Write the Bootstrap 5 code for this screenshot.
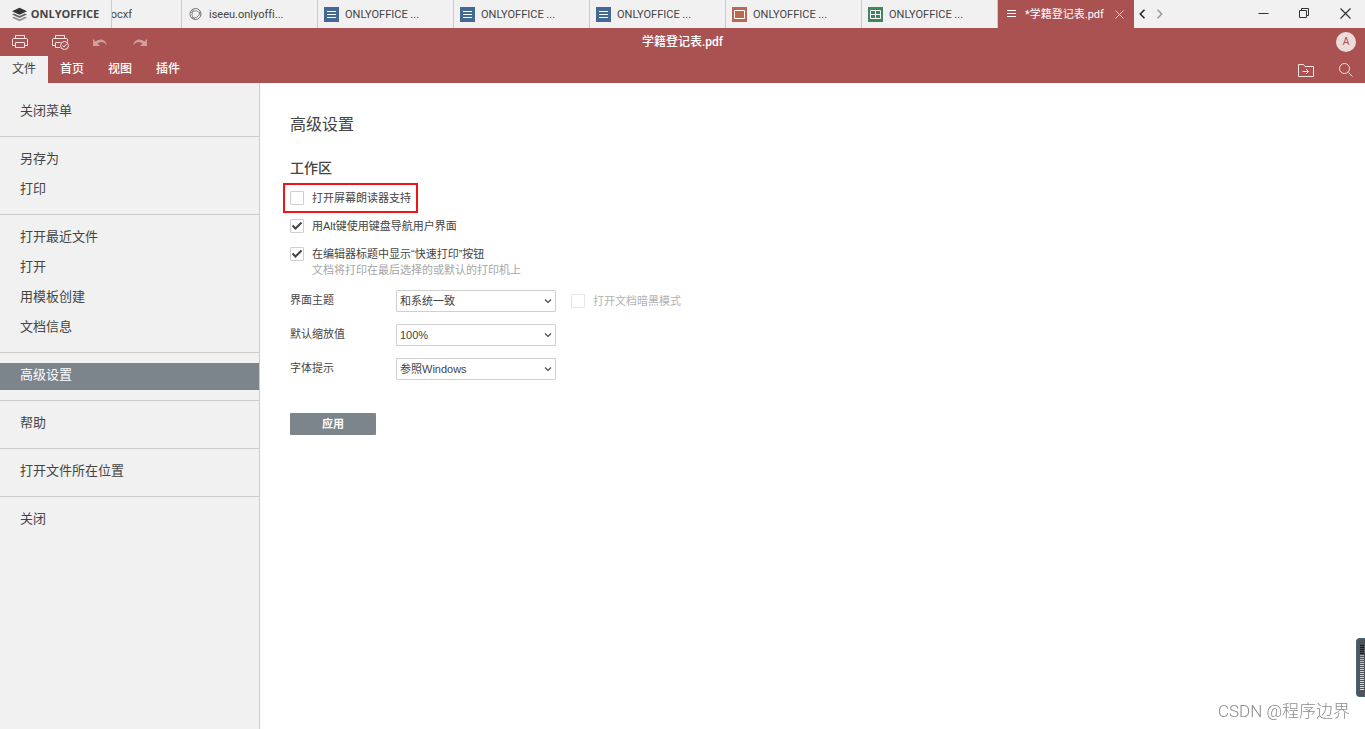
<!DOCTYPE html>
<html lang="zh-CN">
<head>
<meta charset="utf-8">
<meta name="viewport" content="width=device-width, initial-scale=1">
<title>学籍登记表.pdf</title>
<link rel="stylesheet" href="https://cdn.jsdelivr.net/npm/bootstrap@5.3.0/dist/css/bootstrap.min.css">
<style>
  :root { --brand: #aa5252; --panel: #f1f1f1; --line: #cbcbcb; --ink: #444; --accent: #7d858c; }
  body { font-family: "Liberation Sans", "Noto Sans CJK SC", sans-serif; font-size: 11px; line-height: 16px; color: var(--ink); }
  button { font-family: inherit; }
  svg { display: block; flex: none; }
  .plain-btn { border: 0; background: none; padding: 0; color: inherit; display: flex; align-items: center; justify-content: center; }

  /* window tab strip */
  .tab-strip { height: 28px; background: var(--panel); }
  .start-btn { width: 112px; border-right: 1px solid var(--line); font: 700 11px/16px "Open Sans", sans-serif; gap: 4px; }
  .doc-tab { width: 136px; padding: 0 6px; gap: 6px; border-right: 1px solid var(--line); font-family: Roboto, "Noto Sans CJK SC", sans-serif; font-variant-ligatures: none; line-height: 18px; color: var(--ink); text-decoration: none; min-width: 0; }
  .doc-tab span { padding-top: 1px; }
  .doc-tab.clipped { width: 70px; padding: 0; }
  .clip-name { width: 20px; }
  .doc-tab.current { background: var(--brand); border-color: var(--brand); color: #fff; }
  .close-tab { width: 15px; margin-left: auto; }
  .scroll-btn { width: 17px; }
  .win-btns { gap: 2px; }
  .win-btn { width: 39px; }

  /* editor header */
  .app-head { background: var(--brand); color: #fff; }
  .title-row { height: 28px; }
  .tool-btn { width: 40px; height: 28px; }
  .tool-btn:disabled { opacity: .45; }
  .doc-title { font-size: 12px; font-family: Roboto, "Noto Sans CJK SC", sans-serif; font-weight: 500; }
  .avatar { width: 20px; height: 20px; background: #eedcdc; color: var(--brand); font-size: 10px; margin-right: 9px; }
  .ribbon { height: 27px; font-size: 12px; }
  .ribbon a { color: #fff; text-decoration: none; padding: 0 12px; line-height: 27px; font-weight: 500; }
  .ribbon a.current { background: var(--panel); color: var(--ink); font-weight: 400; }

  /* file menu */
  .file-menu { width: 260px; background: var(--panel); border-right: 1px solid var(--line); font-size: 13px; padding-top: 6px; flex: none; }
  .menu-group { padding: 10px 0; display: grid; gap: 3px; border-bottom: 1px solid var(--line); }
  .menu-group:last-child { border: 0; }
  .menu-group a { color: var(--ink); text-decoration: none; padding: 0 20px 3px; line-height: 24px; }
  .menu-group a.current { background: var(--accent); color: #fff; }

  /* settings page */
  .settings { padding: 30px; }
  .settings h1 { font-size: 16px; line-height: 24px; font-weight: 400; margin: 0 0 21px; }
  .settings h2 { font-size: 14px; line-height: 20px; font-weight: 500; margin: 0 0 12px; }
  .option-list { display: grid; gap: 12px; }
  .option { gap: 8px; width: fit-content; }
  .option .form-check-input { width: 14px; height: 14px; margin: 0; flex: none; border: 1px solid #cfcfcf; border-radius: 1px; background-color: #fff; }
  .option .form-check-input:checked { border-color: #cfcfcf; background-color: #fff; background-size: 12px 12px;
    background-image: url("data:image/svg+xml,%3Csvg xmlns='http://www.w3.org/2000/svg' viewBox='0 0 12 12'%3E%3Cpath d='M1.5 5.5 4.5 8.5 10.5 2.5' fill='none' stroke='%23444' stroke-width='2'/%3E%3C/svg%3E"); }
  .option.off { color: #b2b2b2; margin-left: 15px; }
  .option .form-check-input:disabled { opacity: .5; }
  .highlighted { outline: 2px solid #f01414; outline-offset: 5px; }
  .hint { padding-left: 22px; color: #a5a5a5; }
  .field-name { width: 106px; line-height: 20px; }
  .form-select.choice { width: 160px; height: 22px; padding: 0 16px 0 3px; font-size: 11px; line-height: 20px; color: var(--ink); border: 1px solid #cfcfcf; border-radius: 1px; background-size: 8px 8px; background-position: right 3px center;
    background-image: url("data:image/svg+xml,%3Csvg xmlns='http://www.w3.org/2000/svg' viewBox='0 0 8 8'%3E%3Cpath d='M1 2.5 4 5.5 7 2.5' fill='none' stroke='%23444' stroke-width='1.1'/%3E%3C/svg%3E"); }
  .field-rows { display: grid; gap: 12px; margin: 12px 0 33px; }
  .apply-btn { width: 86px; height: 22px; padding: 0; border: 0; border-radius: 1px; background: var(--accent); color: #fff; font-size: 11px; font-weight: 700; line-height: 20px; }

  .watermark { right: 15px; bottom: 6px; font-family: Roboto, "Noto Sans CJK SC", sans-serif; font-size: 17px; line-height: 24px; font-weight: 300; color: #8c8c8c; }
  .meter { right: 0; bottom: 32px; width: 9px; height: 59px; background: #50555b; border: 1px solid #44687a; border-right: 0; border-radius: 4px 0 0 4px; }
  .meter::after { content: ""; position: absolute; right: 1px; top: 6px; height: 46px; width: 4px;
    background: repeating-linear-gradient(transparent 0 1px, #50555b 1px 2px), linear-gradient(#17191c 0 10px, #f0a050 10px, #f5c85a 20px, #f5e678); }
</style>
</head>
<body class="d-flex flex-column min-vh-100">

<svg class="d-none">
  <symbol id="ic-doc" viewBox="0 0 15 15"><rect width="15" height="15" fill="#446995"/><path d="M3 4.500h9M3 7.500h9M3 10.500h9" stroke="#fff"/></symbol>
  <symbol id="ic-slide" viewBox="0 0 15 15"><rect width="15" height="15" fill="#be664f"/><path d="M2.500 3.500h10v8h-10z" fill="none" stroke="#fff"/></symbol>
  <symbol id="ic-sheet" viewBox="0 0 15 15"><rect width="15" height="15" fill="#40865c"/><path d="M2.500 3.500h10v8h-10zM2.500 7.500h10M7.500 3.500v8" fill="none" stroke="#fff"/></symbol>
</svg>

<nav class="tab-strip d-flex align-items-stretch" aria-label="窗口">
  <button class="plain-btn start-btn">
    <svg width="15" height="15" viewBox="0 0 16 16"><path d="M8 .8 16 4.500 8 8.200 0 4.500z" fill="#333"/><path d="M0 8 2.200 7 8 9.600 13.800 7 16 8 8 11.700z" fill="#666"/><path d="M0 11.500 2.200 10.500 8 13.100 13.800 10.500 16 11.500 8 15.200z" fill="#909090"/></svg>
    ONLYOFFICE
  </button>
  <a href="#" class="doc-tab clipped d-flex align-items-center"><span class="clip-name d-flex justify-content-end overflow-hidden">ocxf</span></a>
  <a href="#" class="doc-tab d-flex align-items-center">
    <svg width="15" height="15" viewBox="0 0 15 15" fill="none" stroke="#666"><circle cx="7.500" cy="7" r="5.500" stroke-width=".9"/><path d="M3 5.500Q6 3 9 4T12.500 8.500M12 4.500Q11.500 9 9 10T4 11M7.500 12.500Q4 10.500 4 8T5.500 2.500" stroke-width=".7"/></svg>
    <span>iseeu.onlyoffi...</span>
  </a>
  <a href="#" class="doc-tab d-flex align-items-center"><svg width="15" height="15"><use href="#ic-doc"/></svg><span>ONLYOFFICE ...</span></a>
  <a href="#" class="doc-tab d-flex align-items-center"><svg width="15" height="15"><use href="#ic-doc"/></svg><span>ONLYOFFICE ...</span></a>
  <a href="#" class="doc-tab d-flex align-items-center"><svg width="15" height="15"><use href="#ic-doc"/></svg><span>ONLYOFFICE ...</span></a>
  <a href="#" class="doc-tab d-flex align-items-center"><svg width="15" height="15"><use href="#ic-slide"/></svg><span>ONLYOFFICE ...</span></a>
  <a href="#" class="doc-tab d-flex align-items-center"><svg width="15" height="15"><use href="#ic-sheet"/></svg><span>ONLYOFFICE ...</span></a>
  <div class="doc-tab current d-flex align-items-center">
    <svg width="15" height="15" viewBox="0 0 15 15" stroke="#fff"><path d="M3 3.500h9M3 6.500h9M3 9.500h9"/></svg>
    <span>*学籍登记表.pdf</span>
    <button class="plain-btn close-tab" aria-label="关闭标签"><svg width="9" height="9" viewBox="0 0 9 9" stroke="#e6cccc"><path d="M.5.5l8 8M8.500.5l-8 8"/></svg></button>
  </div>
  <button class="plain-btn scroll-btn" aria-label="向左"><svg width="7" height="10" viewBox="0 0 7 10" fill="none" stroke="#222" stroke-width="1.500"><path d="M5.500.8 1.300 5l4.200 4.200"/></svg></button>
  <button class="plain-btn scroll-btn" aria-label="向右"><svg width="7" height="10" viewBox="0 0 7 10" fill="none" stroke="#999" stroke-width="1.500"><path d="M1.500.8 5.700 5 1.500 9.200"/></svg></button>
  <div class="win-btns d-flex ms-auto">
    <button class="plain-btn win-btn" aria-label="最小化"><svg width="11" height="12" viewBox="0 0 11 12" stroke="#333"><path d="M.5 5.500h10"/></svg></button>
    <button class="plain-btn win-btn" aria-label="还原"><svg width="11" height="12" viewBox="0 0 11 12" fill="none" stroke="#333"><path d="M.5 2.500h7v7h-7zM2.500 2.500v-2h7v7h-2"/></svg></button>
    <button class="plain-btn win-btn" aria-label="关闭窗口"><svg width="11" height="12" viewBox="0 0 11 12" stroke="#333" stroke-width="1.200"><path d="M.5.5l10 10M10.500.5l-10 10"/></svg></button>
  </div>
</nav>

<header class="app-head">
  <div class="title-row row g-0 align-items-center">
    <div class="col d-flex">
      <button class="plain-btn tool-btn" aria-label="打印"><svg width="20" height="20" viewBox="0 0 20 20" fill="none" stroke="#f3e3e3"><path d="M5.500 6.500v-3h9v3M5.500 13.500h-3v-6q0-1 1-1h13q1 0 1 1v6h-3M5.500 10.500h9v5h-9z"/></svg></button>
      <button class="plain-btn tool-btn" aria-label="快速打印"><svg width="20" height="20" viewBox="0 0 20 20" fill="none" stroke="#f3e3e3"><path d="M5.500 6.500v-3h9v3M5.500 13.500h-3v-6q0-1 1-1h13q1 0 1 1v2M10 15.500H5.500v-5h5"/><circle cx="14.500" cy="13.500" r="4"/><path d="M12.500 13.500l1.500 1.500 3-3.500"/></svg></button>
      <button class="plain-btn tool-btn" disabled aria-label="撤消"><svg width="20" height="20" viewBox="0 0 20 20" fill="#fff"><path d="M3 7v7h7L7.500 11.500C10.500 9 14 9.500 17 13.500 16 7.500 10 5.500 5.500 9.500z"/></svg></button>
      <button class="plain-btn tool-btn" disabled aria-label="重做"><svg width="20" height="20" viewBox="0 0 20 20" fill="#fff"><path d="M17 7v7h-7l2.500-2.500C9.500 9 6 9.500 3 13.500 4 7.500 10 5.500 14.500 9.500z"/></svg></button>
    </div>
    <div class="col-auto doc-title">学籍登记表.pdf</div>
    <div class="col d-flex justify-content-end"><button class="plain-btn avatar rounded-circle" aria-label="用户">A</button></div>
  </div>
  <nav class="ribbon d-flex">
    <a href="#" class="current">文件</a>
    <a href="#">首页</a>
    <a href="#">视图</a>
    <a href="#">插件</a>
    <button class="plain-btn tool-btn ms-auto" aria-label="打开文件位置"><svg width="18" height="14" viewBox="0 0 18 14" fill="none" stroke="#f3e3e3"><path d="M2.500 13.500v-12h5l1.500 2h8.500v10zM6.500 8.500h6M10 6l2.500 2.500L10 11"/></svg></button>
    <button class="plain-btn tool-btn" aria-label="搜索"><svg width="16" height="14" viewBox="0 0 16 14" fill="none" stroke="#f3e3e3"><circle cx="7.500" cy="5.500" r="5"/><path d="M11.500 9.500l4 4"/></svg></button>
  </nav>
</header>

<div class="d-flex flex-grow-1">
  <nav class="file-menu" aria-label="文件菜单">
    <div class="menu-group"><a href="#">关闭菜单</a></div>
    <div class="menu-group"><a href="#">另存为</a><a href="#">打印</a></div>
    <div class="menu-group"><a href="#">打开最近文件</a><a href="#">打开</a><a href="#">用模板创建</a><a href="#">文档信息</a></div>
    <div class="menu-group"><a href="#" class="current">高级设置</a></div>
    <div class="menu-group"><a href="#">帮助</a></div>
    <div class="menu-group"><a href="#">打开文件所在位置</a></div>
    <div class="menu-group"><a href="#">关闭</a></div>
  </nav>

  <main class="settings flex-grow-1">
    <h1>高级设置</h1>
    <h2>工作区</h2>
    <div class="option-list">
      <div class="option highlighted d-flex align-items-center"><input class="form-check-input" type="checkbox" id="reader"><label for="reader">打开屏幕朗读器支持</label></div>
      <div class="option d-flex align-items-center"><input class="form-check-input" type="checkbox" id="altkey" checked><label for="altkey">用Alt键使用键盘导航用户界面</label></div>
      <div>
        <div class="option d-flex align-items-center"><input class="form-check-input" type="checkbox" id="quick" checked aria-describedby="quick-hint"><label for="quick">在编辑器标题中显示“快速打印”按钮</label></div>
        <div class="hint" id="quick-hint">文档将打印在最后选择的或默认的打印机上</div>
      </div>
    </div>
    <div class="field-rows">
      <div class="d-flex">
        <label class="field-name" for="theme">界面主题</label>
        <select class="form-select choice" id="theme"><option>和系统一致</option></select>
        <div class="option off d-flex align-items-center"><input class="form-check-input" type="checkbox" id="dark" disabled><label for="dark">打开文档暗黑模式</label></div>
      </div>
      <div class="d-flex">
        <label class="field-name" for="zoom">默认缩放值</label>
        <select class="form-select choice" id="zoom"><option>100%</option></select>
      </div>
      <div class="d-flex">
        <label class="field-name" for="hinting">字体提示</label>
        <select class="form-select choice" id="hinting"><option>参照Windows</option></select>
      </div>
    </div>
    <button class="apply-btn">应用</button>
  </main>
</div>

<div class="meter position-fixed"></div>
<div class="watermark position-fixed">CSDN @程序边界</div>

<script src="https://cdn.jsdelivr.net/npm/bootstrap@5.3.0/dist/js/bootstrap.bundle.min.js"></script>
</body>
</html>
